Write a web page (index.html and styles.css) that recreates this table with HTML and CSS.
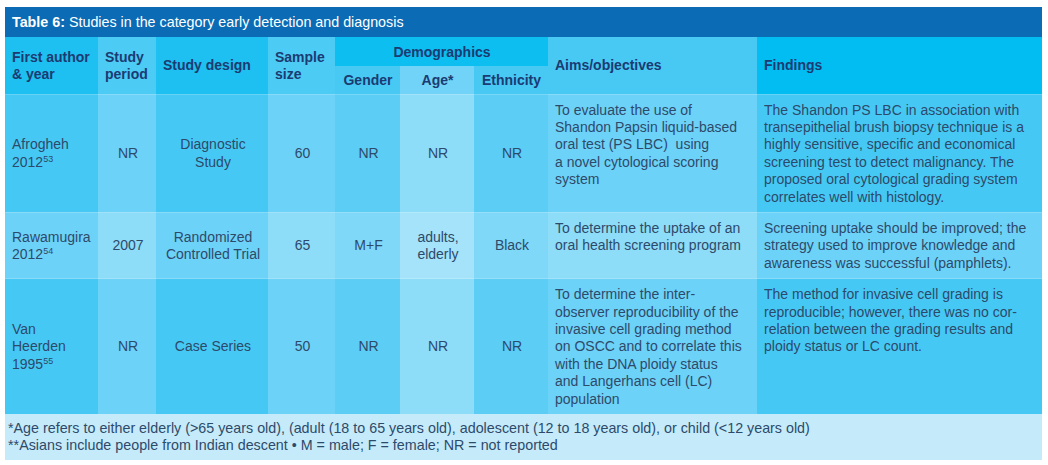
FILE: index.html
```html
<!DOCTYPE html>
<html>
<head>
<meta charset="utf-8">
<link rel="stylesheet" href="styles.css">
</head>
<body>
<div class="wrap">
  <div class="title"><b>Table 6:</b> Studies in the category early detection and diagnosis</div>
  <table class="tbl">
    <colgroup>
      <col class="w1"><col class="w2"><col class="w3"><col class="w4"><col class="w5"><col class="w6"><col class="w7"><col class="w8"><col class="w9">
    </colgroup>
    <thead>
      <tr class="hr1">
        <th rowspan="2" class="ha left">First author<br>&amp; year</th>
        <th rowspan="2" class="hb left">Study<br>period</th>
        <th rowspan="2" class="ha left">Study design</th>
        <th rowspan="2" class="hb left">Sample<br>size</th>
        <th colspan="3" class="hd">Demographics</th>
        <th rowspan="2" class="hm left">Aims/objectives</th>
        <th rowspan="2" class="hf left">Findings</th>
      </tr>
      <tr class="hr2">
        <th class="hm">Gender</th>
        <th class="hl">Age*</th>
        <th class="hm">Ethnicity</th>
      </tr>
    </thead>
    <tbody>
      <tr class="dark">
        <td class="ca left mid">Afrogheh<br>2012<sup>53</sup></td>
        <td class="cb">NR</td>
        <td class="ca">Diagnostic<br>Study</td>
        <td class="cb">60</td>
        <td class="cm">NR</td>
        <td class="cl">NR</td>
        <td class="cm">NR</td>
        <td class="cb txt">To evaluate the use of<br>Shandon Papsin liquid-based<br>oral test (PS LBC)&nbsp; using<br>a novel cytological scoring<br>system</td>
        <td class="ca txt">The Shandon PS LBC in association with<br>transepithelial brush biopsy technique is a<br>highly sensitive, specific and economical<br>screening test to detect malignancy. The<br>proposed oral cytological grading system<br>correlates well with histology.</td>
      </tr>
      <tr class="light">
        <td class="ca left mid">Rawamugira<br>2012<sup>54</sup></td>
        <td class="cb">2007</td>
        <td class="ca">Randomized<br>Controlled Trial</td>
        <td class="cb">65</td>
        <td class="cm">M+F</td>
        <td class="cl">adults,<br>elderly</td>
        <td class="cm">Black</td>
        <td class="cb txt">To determine the uptake of an<br>oral health screening program</td>
        <td class="ca txt">Screening uptake should be improved; the<br>strategy used to improve knowledge and<br>awareness was successful (pamphlets).</td>
      </tr>
      <tr class="dark">
        <td class="ca left mid">Van<br>Heerden<br>1995<sup>55</sup></td>
        <td class="cb">NR</td>
        <td class="ca">Case Series</td>
        <td class="cb">50</td>
        <td class="cm">NR</td>
        <td class="cl">NR</td>
        <td class="cm">NR</td>
        <td class="cb txt">To determine the inter-<br>observer reproducibility of the<br>invasive cell grading method<br>on OSCC and to correlate this<br>with the DNA ploidy status<br>and Langerhans cell (LC)<br>population</td>
        <td class="ca txt">The method for invasive cell grading is<br>reproducible; however, there was no cor-<br>relation between the grading results and<br>ploidy status or LC count.</td>
      </tr>
    </tbody>
  </table>
  <div class="foot">
    <div>*Age refers to either elderly (&gt;65 years old), (adult (18 to 65 years old), adolescent (12 to 18 years old), or child (&lt;12 years old)</div>
    <div>**Asians include people from Indian descent &bull; M = male; F = female; NR = not reported</div>
  </div>
</div>
</body>
</html>
```

FILE: styles.css
```css
html, body {
  margin: 0;
  padding: 0;
  background: #ffffff;
}
body {
  font-family: "Liberation Sans", Arial, sans-serif;
  font-size: 14px;
  color: #2d4a6b;
}
.wrap {
  width: 1037px;
  margin: 7px 0 0 5px;
}
.title {
  background: #0b6cb5;
  color: #ffffff;
  height: 30px;
  line-height: 30px;
  padding-left: 7px;
  font-size: 14.3px;
}
.title b { font-weight: bold; }
.tbl {
  width: 1037px;
  border-collapse: collapse;
  table-layout: fixed;
  border-spacing: 0;
}
.w1 { width: 93px; }
.w2 { width: 58px; }
.w3 { width: 112px; }
.w4 { width: 67px; }
.w5 { width: 65px; }
.w6 { width: 74px; }
.w7 { width: 74px; }
.w8 { width: 209px; }
.w9 { width: 285px; }

th {
  font-weight: bold;
  color: #1b3b72;
  font-size: 14px;
  line-height: 17px;
  padding: 1px 6px 0 7px;
  text-align: center;
  vertical-align: middle;
}
.hr1 { height: 29px; }
.hr2 { height: 28px; }
th.left { text-align: left; }
.ha { background: #1ec0f1; }
.hb { background: #4ccbf5; }
.hm { background: #47c9f4; }
.hl { background: #70d3f7; }
.hd { background: #0dbef1; }
.hf { background: #02bdf2; }

td {
  font-size: 14px;
  line-height: 17.4px;
  padding: 7px 5px 6px 7px;
  text-align: center;
  vertical-align: middle;
  color: #2d4a6b;
  border-top: 1px solid rgba(255,255,255,0.18);
}
td.left { text-align: left; }
td.txt {
  text-align: left;
  vertical-align: top;
  padding-left: 7px;
  padding-right: 2px;
  white-space: nowrap;
}
sup {
  font-size: 9px;
  line-height: 0;
  vertical-align: 5px;
}
.dark .ca { background: #45c9f4; }
.dark .cb { background: #6dd2f7; }
.dark .cm { background: #5ccdf5; }
.dark .cl { background: #8ddcf8; }
.light .ca { background: #6dd2f7; }
.light .cb { background: #8ddcf8; }
.light .cm { background: #7fd8f8; }
.light .cl { background: #a4e3fa; }
.light { height: 66px; }

.foot {
  background: #c5ebfa;
  color: #2d4a6b;
  font-size: 14.3px;
  line-height: 17px;
  padding: 6px 3px 6px 3px;
  white-space: nowrap;
}
```
